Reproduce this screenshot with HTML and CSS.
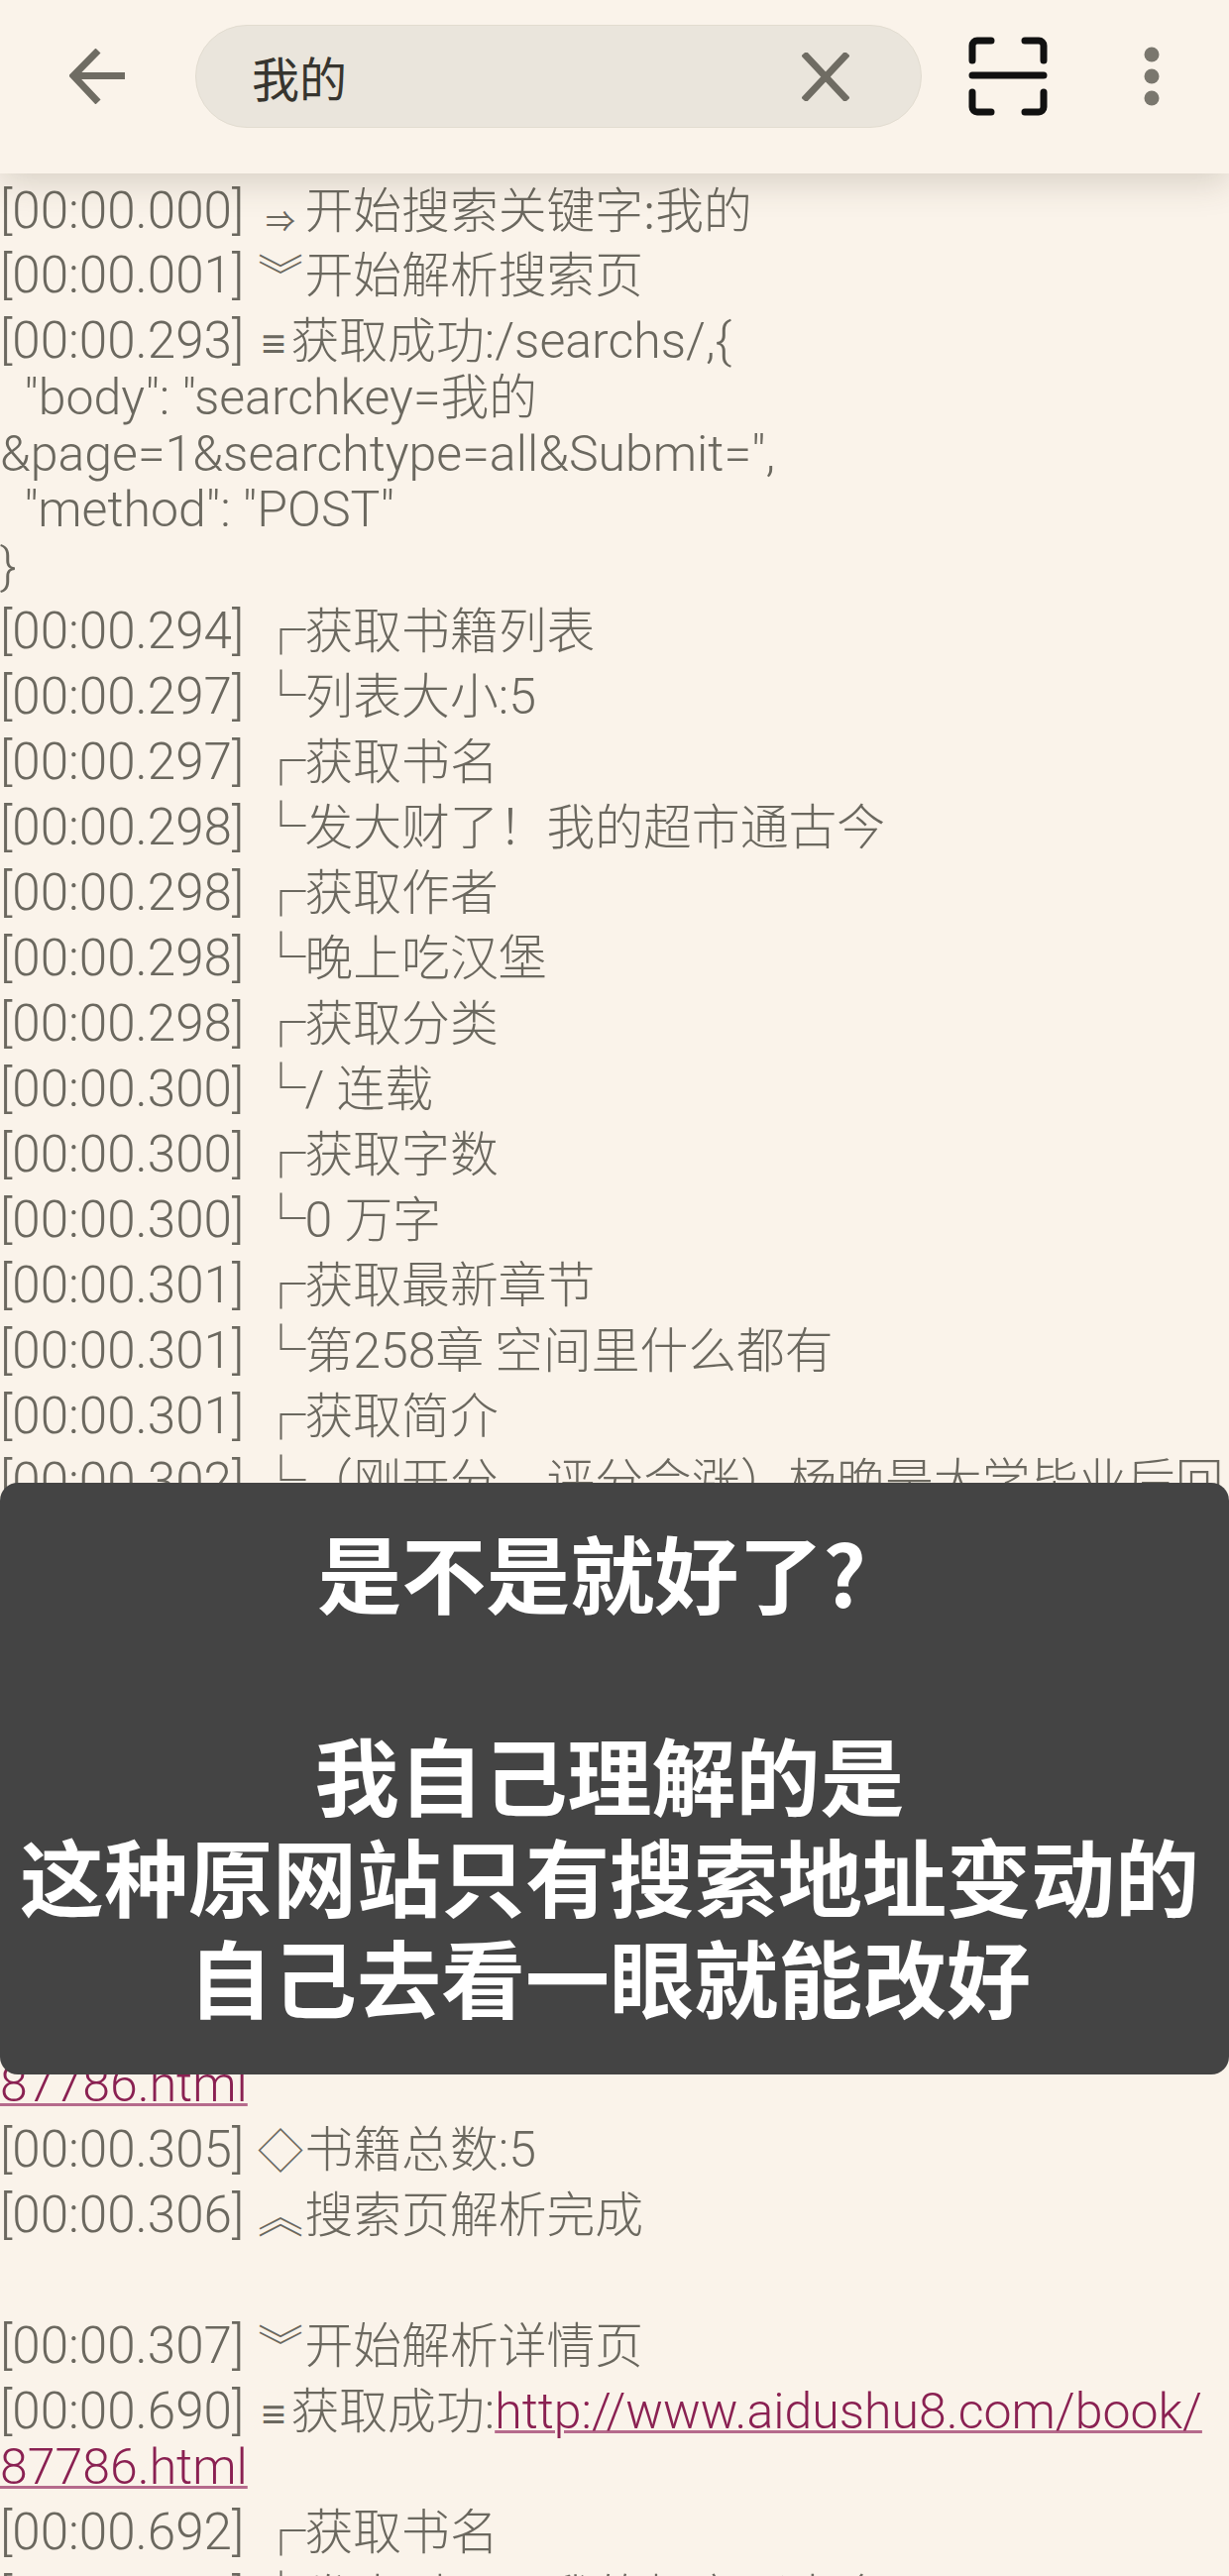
FILE: index.html
```html
<!DOCTYPE html>
<html lang="zh-CN">
<head>
	<meta charset="UTF-8">
	<title>搜索日志</title>
	<link rel="stylesheet" href="styles.css">
</head>
<body>
	<div class="page">
		<!-- 顶部搜索栏 -->
		<header class="toolbar">
			<svg class="back" viewBox="0 0 60 56"><path d="M56 27.5H5M29 2 4 27.5 29 54"/></svg>
			<div class="search">
				<span class="search-text">我的</span>
				<svg class="clear" viewBox="0 0 48 49"><path d="M2 1 46 48M46 1 2 48"/></svg>
			</div>
			<svg class="scan" viewBox="0 0 80 80"><path d="M4 24V9a5 5 0 0 1 5-5H23M57 4H71a5 5 0 0 1 5 5V24M4 56V71a5 5 0 0 0 5 5H23M57 76H71a5 5 0 0 0 5-5V56M4 39H76"/></svg>
			<svg class="more" viewBox="0 0 16 60"><circle cx="8" cy="8" r="7.5"/><circle cx="8" cy="30" r="7.5"/><circle cx="8" cy="52" r="7.5"/></svg>
		</header>

		<!-- 日志 -->
		<div class="log">
			<p class="row"><span class="ts">[00:00.000]</span> <span class="mk arrow">⇒</span><span class="zh">开始搜索关键字:我的</span></p>
			<p class="row"><span class="ts">[00:00.001]</span> <span class="mk wide">︾</span><span class="zh">开始解析搜索页</span></p>
			<p class="row"><span class="ts">[00:00.293]</span> <span class="mk eq">≡</span><span class="zh">获取成功</span>:/searchs/,{
  "body": "searchkey=<span class="zh">我的</span>
&amp;page=1&amp;searchtype=all&amp;Submit=",
  "method": "POST"
}</p>
			<p class="row"><span class="ts">[00:00.294]</span> <span class="mk box">┌</span><span class="zh">获取书籍列表</span></p>
			<p class="row"><span class="ts">[00:00.297]</span> <span class="mk box">└</span><span class="zh">列表大小</span>:5</p>
			<p class="row"><span class="ts">[00:00.297]</span> <span class="mk box">┌</span><span class="zh">获取书名</span></p>
			<p class="row"><span class="ts">[00:00.298]</span> <span class="mk box">└</span><span class="zh">发大财了！我的超市通古今</span></p>
			<p class="row"><span class="ts">[00:00.298]</span> <span class="mk box">┌</span><span class="zh">获取作者</span></p>
			<p class="row"><span class="ts">[00:00.298]</span> <span class="mk box">└</span><span class="zh">晚上吃汉堡</span></p>
			<p class="row"><span class="ts">[00:00.298]</span> <span class="mk box">┌</span><span class="zh">获取分类</span></p>
			<p class="row"><span class="ts">[00:00.300]</span> <span class="mk box">└</span>/ <span class="zh">连载</span></p>
			<p class="row"><span class="ts">[00:00.300]</span> <span class="mk box">┌</span><span class="zh">获取字数</span></p>
			<p class="row"><span class="ts">[00:00.300]</span> <span class="mk box">└</span>0 <span class="zh">万字</span></p>
			<p class="row"><span class="ts">[00:00.301]</span> <span class="mk box">┌</span><span class="zh">获取最新章节</span></p>
			<p class="row"><span class="ts">[00:00.301]</span> <span class="mk box">└</span><span class="zh">第</span>258<span class="zh">章 空间里什么都有</span></p>
			<p class="row"><span class="ts">[00:00.301]</span> <span class="mk box">┌</span><span class="zh">获取简介</span></p>
			<p class="row"><span class="ts">[00:00.302]</span> <span class="mk box">└</span><span class="zh">（刚开分，评分会涨）杨晚是大学毕业后回</span></p>
			<!-- 被黑色字幕挡住的部分 -->
			<div class="covered"></div>
			<p class="row"><a href="#">87786.html</a></p>
			<p class="row"><span class="ts">[00:00.305]</span> <span class="mk wide">◇</span><span class="zh">书籍总数</span>:5</p>
			<p class="row"><span class="ts">[00:00.306]</span> <span class="mk wide">︽</span><span class="zh">搜索页解析完成</span></p>
			<p class="row"><br></p>
			<p class="row"><span class="ts">[00:00.307]</span> <span class="mk wide">︾</span><span class="zh">开始解析详情页</span></p>
			<p class="row"><span class="ts">[00:00.690]</span> <span class="mk eq">≡</span><span class="zh">获取成功</span>:<a href="#">http://www.aidushu8.com/book/
87786.html</a></p>
			<p class="row"><span class="ts">[00:00.692]</span> <span class="mk box">┌</span><span class="zh">获取书名</span></p>
			<p class="row"><span class="ts">[00:00.692]</span> <span class="mk box">└</span><span class="zh">发大财了！我的超市通古今</span></p>
		</div>

		<!-- 字幕 -->
		<div class="caption"><span class="caption-first">是不是就好了?</span><br><br>我自己理解的是<br>这种原网站只有搜索地址变动的<br>自己去看一眼就能改好</div>
	</div>
</body>
</html>
```

FILE: styles.css
```css
*{
	padding: 0;
	margin: 0;
	box-sizing: border-box;
}
html,body{
	width: 1240px;
	height: 2599px;
	overflow: hidden;
	background: #faf3ea;
}
.page{
	position: relative;
	width: 1240px;
	height: 2599px;
	overflow: hidden;
	font-family: Roboto, "Noto Sans CJK SC", sans-serif;
}
/*顶部*/
.toolbar{
	position: relative;
	z-index: 2;
	display: flex;
	align-items: center;
	height: 175px;
	padding: 25px 0 46px 70px;
	background: #faf3ea;
	box-shadow: 0 8px 34px rgba(70,60,40,.2);
}
.toolbar svg{
	flex: none;
	display: block;
	fill: none;
}
.back{
	width: 60px;
	height: 56px;
	stroke: #6f6c63;
	stroke-width: 7;
}
.search{
	display: flex;
	align-items: center;
	justify-content: space-between;
	width: 733px;
	height: 104px;
	margin-left: 67px;
	padding: 0 72px 0 56px;
	background: #eae5dc;
	border: 1px solid #e2dcd0;
	border-radius: 52px;
}
.search-text{
	font: 48px "Noto Sans CJK SC", sans-serif;
	color: #37352f;
}
.clear{
	width: 48px;
	height: 49px;
	stroke: #6f6c63;
	stroke-width: 7;
}
.scan{
	width: 80px;
	height: 80px;
	margin-left: 47px;
	stroke: #111;
	stroke-width: 7;
	stroke-linecap: round;
}
.more{
	width: 16px;
	height: 60px;
	margin-left: 97px;
}
.toolbar .more{
	fill: #7a776e;
}
/*日志*/
.log{
	padding-top: 9.5px;
	font-size: 50px;
	font-weight: 300;
	line-height: 56.6px;
	color: #6b685f;
}
.row{
	margin-bottom: 9.4px;
	min-height: 56.6px;
	white-space: pre;
}
.ts{
	font-size: 51.2px;
	line-height: 0;
}
.zh{
	font-family: "Noto Sans CJK SC", sans-serif;
	font-size: 48.8px;
	font-weight: 300;
	line-height: 0;
}
.mk{
	display: inline-block;
	font-family: "DejaVu Sans", sans-serif;
	line-height: 0;
	text-align: center;
}
.arrow{
	width: 49px;
	font-size: 30px;
	vertical-align: -4px;
}
.wide{
	width: 49px;
	font-family: "Noto Sans CJK SC", sans-serif;
	font-size: 46px;
}
.eq{
	width: 35px;
	font-size: 42px;
}
.box{
	width: 49px;
	font-family: "Noto Sans CJK SC", sans-serif;
	font-size: 50px;
	font-weight: 300;
	text-align: left;
}
a{
	color: #8a2152;
	text-decoration: underline;
	text-decoration-color: #b56a8c;
	text-decoration-thickness: 3px;
}
/*挡住的部分*/
.covered{
	height: 542px;
}
/*字幕*/
.caption{
	position: absolute;
	z-index: 3;
	left: 0;
	right: 0;
	top: 1496px;
	height: 597px;
	padding: 38px 10px 0 0;
	background: #444;
	border-radius: 18px;
	font-family: "Noto Sans CJK SC", sans-serif;
	font-size: 85px;
	font-weight: 700;
	line-height: 102px;
	color: #fff;
	text-align: center;
}
.caption-first{
	padding-right: 36px;
}
```
